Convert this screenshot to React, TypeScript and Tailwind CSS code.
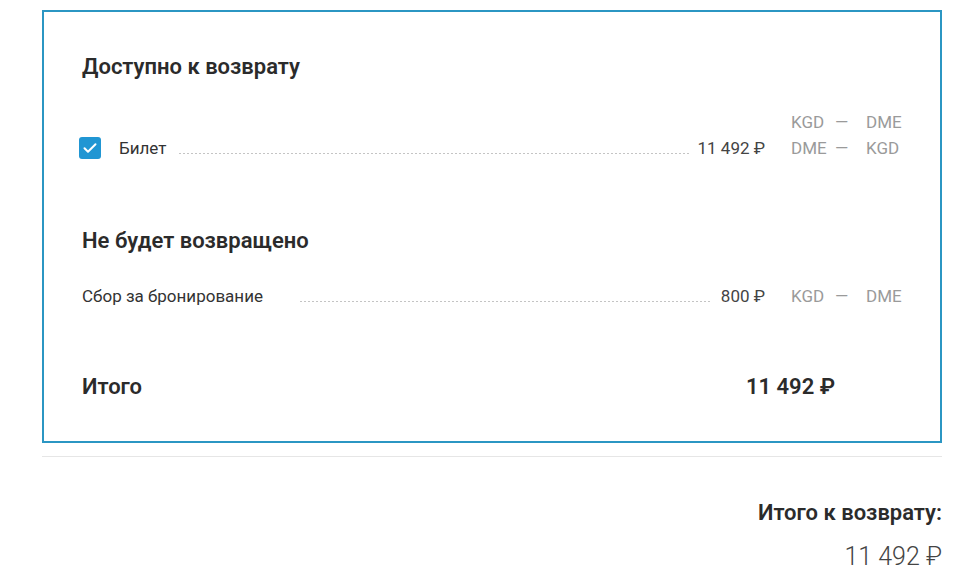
import React from "react";

const font = { fontFamily: "Roboto, 'Noto Sans', sans-serif" };

function Dots({ className = "" }: { className?: string }) {
  return (
    <div
      className={`mb-[7px] h-px flex-1 bg-[linear-gradient(to_right,#c4c4c4_50%,transparent_50%)] bg-[length:4px_1px] bg-repeat-x ${className}`}
    />
  );
}

function Route({ from, to }: { from: string; to: string }) {
  return (
    <div className="flex text-[17px] leading-[26px] text-[#9a9a9a]">
      <span className="w-[44px]">{from}</span>
      <span className="w-[31px]">—</span>
      <span>{to}</span>
    </div>
  );
}

export default function App() {
  return (
    <div className="min-h-screen bg-white" style={font}>
      <div className="ml-[42px] w-[900px] pt-[10px]">
        <section className="border-2 border-[#2b96c3] px-[38px] pb-[40px] pt-[41px] text-[#333]">
          <h2 className="text-[22px] font-semibold leading-[28px] text-[#2b2b2b]">
            Доступно к возврату
          </h2>

          <div className="mt-[28px] flex items-end">
            <div className="flex flex-1 items-end">
              <span className="-ml-[3px] mb-[2px] flex h-[22px] w-[22px] items-center justify-center rounded-[3px] bg-[#2196d3]">
                <svg width="16" height="16" viewBox="0 0 16 16" fill="none">
                  <path
                    d="M2.5 8.3l3.5 3.5 7.5-7.6"
                    stroke="#fff"
                    strokeWidth="2"
                    strokeLinecap="round"
                    strokeLinejoin="round"
                  />
                </svg>
              </span>
              <span className="ml-[18px] text-[17px] leading-[26px]">Билет</span>
              <Dots className="ml-[13px] mr-[9px]" />
              <span className="text-[17px] leading-[26px] text-[#444]">11 492 ₽</span>
            </div>
            <div className="ml-[26px] w-[111px]">
              <Route from="KGD" to="DME" />
              <Route from="DME" to="KGD" />
            </div>
          </div>

          <h2 className="mt-[66px] text-[22px] font-semibold leading-[28px] text-[#2b2b2b]">
            Не будет возвращено
          </h2>

          <div className="mt-[28px] flex items-end">
            <div className="flex flex-1 items-end">
              <span className="text-[17px] leading-[26px]">Сбор за бронирование</span>
              <Dots className="ml-[37px] mr-[9px]" />
              <span className="text-[17px] leading-[26px] text-[#444]">800 ₽</span>
            </div>
            <div className="ml-[26px] w-[111px]">
              <Route from="KGD" to="DME" />
            </div>
          </div>

          <div className="mt-[64px] flex items-center justify-between pr-[67px] text-[22px] font-semibold leading-[28px] text-[#2b2b2b]">
            <span>Итого</span>
            <span>11 492 ₽</span>
          </div>
        </section>

        <div className="mt-[13px] h-px bg-[#e6e6e6]" />

        <div className="mt-[42px] flex flex-col items-end">
          <div className="text-[22px] font-semibold leading-[28px] text-[#2b2b2b]">
            Итого к возврату:
          </div>
          <div className="mt-[14px] text-[25px] font-light leading-[32px] text-[#444]">
            11 492 ₽
          </div>
        </div>
      </div>
    </div>
  );
}
